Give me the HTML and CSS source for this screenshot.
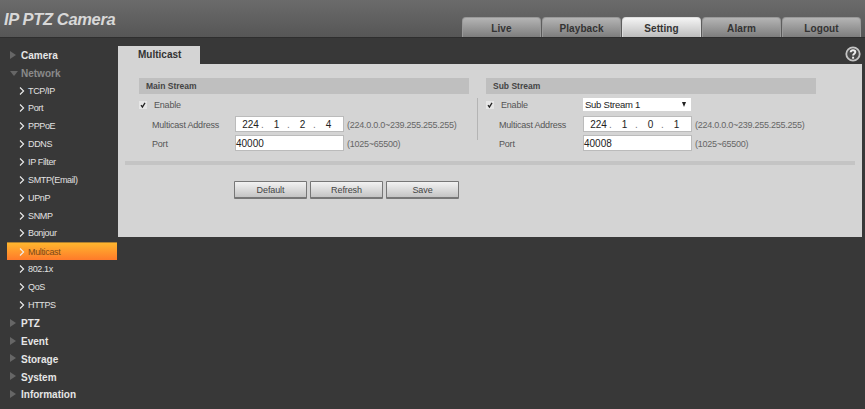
FILE: index.html
```html
<!DOCTYPE html>
<html lang="en">
<head>
    <meta charset="UTF-8">
    <title>IP PTZ Camera</title>
    <link rel="stylesheet" href="styles.css">
</head>
<body>
    <header class="top-bar">
        <div class="logo">IP PTZ Camera</div>
        <nav class="top-nav">
            <a class="top-tab">Live</a>
            <a class="top-tab">Playback</a>
            <a class="top-tab active">Setting</a>
            <a class="top-tab">Alarm</a>
            <a class="top-tab">Logout</a>
        </nav>
    </header>

    <div class="main">
        <ul class="side-menu">
            <li class="group"><span class="arrow"></span>Camera</li>
            <li class="group open"><span class="arrow"></span>Network</li>
            <li class="item"><svg class="chev" viewBox="0 0 6 8"><path d="M1 .5 4.600 4 1 7.500"/></svg>TCP/IP</li>
            <li class="item"><svg class="chev" viewBox="0 0 6 8"><path d="M1 .5 4.600 4 1 7.500"/></svg>Port</li>
            <li class="item"><svg class="chev" viewBox="0 0 6 8"><path d="M1 .5 4.600 4 1 7.500"/></svg>PPPoE</li>
            <li class="item"><svg class="chev" viewBox="0 0 6 8"><path d="M1 .5 4.600 4 1 7.500"/></svg>DDNS</li>
            <li class="item"><svg class="chev" viewBox="0 0 6 8"><path d="M1 .5 4.600 4 1 7.500"/></svg>IP Filter</li>
            <li class="item"><svg class="chev" viewBox="0 0 6 8"><path d="M1 .5 4.600 4 1 7.500"/></svg>SMTP(Email)</li>
            <li class="item"><svg class="chev" viewBox="0 0 6 8"><path d="M1 .5 4.600 4 1 7.500"/></svg>UPnP</li>
            <li class="item"><svg class="chev" viewBox="0 0 6 8"><path d="M1 .5 4.600 4 1 7.500"/></svg>SNMP</li>
            <li class="item"><svg class="chev" viewBox="0 0 6 8"><path d="M1 .5 4.600 4 1 7.500"/></svg>Bonjour</li>
            <li class="item active"><svg class="chev" viewBox="0 0 6 8"><path d="M1 .5 4.600 4 1 7.500"/></svg>Multicast</li>
            <li class="item"><svg class="chev" viewBox="0 0 6 8"><path d="M1 .5 4.600 4 1 7.500"/></svg>802.1x</li>
            <li class="item"><svg class="chev" viewBox="0 0 6 8"><path d="M1 .5 4.600 4 1 7.500"/></svg>QoS</li>
            <li class="item"><svg class="chev" viewBox="0 0 6 8"><path d="M1 .5 4.600 4 1 7.500"/></svg>HTTPS</li>
            <li class="group"><span class="arrow"></span>PTZ</li>
            <li class="group"><span class="arrow"></span>Event</li>
            <li class="group"><span class="arrow"></span>Storage</li>
            <li class="group"><span class="arrow"></span>System</li>
            <li class="group"><span class="arrow"></span>Information</li>
        </ul>

        <section class="content">
            <div class="tab-row">
                <div class="page-tab">Multicast</div>
                <svg class="help" viewBox="0 0 16 16">
                    <circle cx="8" cy="8" r="6.700"/>
                    <path d="M5.700 6.300C5.800 4.900 6.800 4.300 8 4.300c1.400 0 2.300.7 2.300 1.800 0 1.700-2.200 1.700-2.200 3.500"/>
                    <path d="M8.100 10.700v2"/>
                </svg>
            </div>
            <div class="panel">
                <div class="streams">
                    <div class="stream">
                        <h3 class="stream-title">Main Stream</h3>
                        <div class="enable-row">
                            <label class="enable"><svg class="check" viewBox="0 0 8 8"><path d="M2 4.200 3.400 6 6 1.800"/></svg>Enable</label>
                        </div>
                        <div class="row">
                            <span class="label">Multicast Address</span>
                            <div class="field ip"><span>224</span><i>.</i><span>1</span><i>.</i><span>2</span><i>.</i><span>4</span></div>
                            <span class="hint">(224.0.0.0~239.255.255.255)</span>
                        </div>
                        <div class="row">
                            <span class="label">Port</span>
                            <div class="field">40000</div>
                            <span class="hint">(1025~65500)</span>
                        </div>
                    </div>
                    <div class="stream second">
                        <h3 class="stream-title">Sub Stream</h3>
                        <div class="enable-row">
                            <label class="enable"><svg class="check" viewBox="0 0 8 8"><path d="M2 4.200 3.400 6 6 1.800"/></svg>Enable</label>
                            <div class="select">Sub Stream 1<span class="caret"></span></div>
                        </div>
                        <div class="row">
                            <span class="label">Multicast Address</span>
                            <div class="field ip"><span>224</span><i>.</i><span>1</span><i>.</i><span>0</span><i>.</i><span>1</span></div>
                            <span class="hint">(224.0.0.0~239.255.255.255)</span>
                        </div>
                        <div class="row">
                            <span class="label">Port</span>
                            <div class="field">40008</div>
                            <span class="hint">(1025~65500)</span>
                        </div>
                    </div>
                </div>
                <div class="divider"></div>
                <div class="buttons">
                    <button class="btn">Default</button>
                    <button class="btn">Refresh</button>
                    <button class="btn">Save</button>
                </div>
            </div>
        </section>
    </div>
</body>
</html>
```

FILE: styles.css
```css
html, body {
    margin: 0;
    height: 100%;
}
body {
    background-color: #383838;
    font-family: "Liberation Sans", Arial, sans-serif;
    font-size: 10px;
    overflow: hidden;
}
.top-bar {
    display: flex;
    justify-content: space-between;
    height: 37px;
    background: linear-gradient(#6b6b6b, #565656);
    border-bottom: 1px solid #2e2e2e;
}
.logo {
    padding: 10px 0 0 4px;
    font-size: 16.500px;
    font-weight: bold;
    font-style: italic;
    letter-spacing: -0.35px;
    color: #d8d8d8;
}
.top-nav {
    display: flex;
    align-items: flex-end;
    gap: 1px;
    padding-right: 4px;
}
.top-tab {
    width: 79px;
    height: 20px;
    line-height: 21px;
    text-align: center;
    font-size: 10px;
    font-weight: bold;
    letter-spacing: 0.1px;
    color: #333;
    background: linear-gradient(#b4b4b4, #7d7d7d);
    border: 1px solid #999;
    border-bottom: none;
    border-radius: 4px 4px 0 0;
    box-sizing: border-box;
}
.top-tab.active {
    background: linear-gradient(#f4f4f4, #bcbcbc);
    border-color: #ddd;
}
.main {
    display: flex;
    align-items: flex-start;
}
.side-menu {
    width: 110px;
    margin: 8px 0 0 8px;
    padding: 0;
    list-style: none;
    flex-shrink: 0;
}
.side-menu li {
    display: flex;
    align-items: center;
    height: 17.850px;
    white-space: nowrap;
}
.group {
    padding: 2px 0 0 13px;
    box-sizing: border-box;
    font-size: 10px;
    font-weight: bold;
    color: #e6e6e6;
    position: relative;
}
.group.open {
    color: #8a8a8a;
}
.arrow {
    position: absolute;
    left: 2px;
    top: 5px;
    border-left: 6px solid #666;
    border-top: 4px solid transparent;
    border-bottom: 4px solid transparent;
}
.open .arrow {
    left: 2px;
    top: 7px;
    border-top: 5px solid #666;
    border-left: 4px solid transparent;
    border-right: 4px solid transparent;
    border-bottom: none;
}
.item {
    font-size: 9px;
    letter-spacing: -0.35px;
    color: #e2e2e2;
}
.item.active {
    width: 110px;
    margin-left: -1px;
    padding-left: 1px;
    box-sizing: border-box;
    color: #7a4a1a;
    background: linear-gradient(#ffb62e, #ff7a2a);
    border-top: 1px solid #b08030;
}
.chev {
    width: 6px;
    height: 8px;
    margin: 0 3px 0 11px;
    fill: none;
    stroke: #eee;
    stroke-width: 1.100;
}
.content {
    flex: 1;
    margin-top: 8px;
    margin-right: 3px;
}
.tab-row {
    display: flex;
    justify-content: space-between;
    height: 18px;
}
.page-tab {
    width: 82px;
    padding-left: 20px;
    box-sizing: border-box;
    line-height: 18px;
    font-size: 10px;
    font-weight: bold;
    color: #333;
    background-color: #d4d4d4;
}
.help {
    width: 16px;
    height: 16px;
    margin-right: 1px;
    fill: #4a4a4a;
    stroke: #c4c4c4;
    stroke-width: 1.800;
}
.help path {
    fill: none;
    stroke: #eee;
    stroke-width: 2;
}
.panel {
    height: 173px;
    background-color: #d4d4d4;
    padding-top: 14px;
    box-sizing: border-box;
}
.streams {
    display: flex;
    padding-left: 21px;
    gap: 17px;
}
.stream {
    width: 330px;
    position: relative;
}
.stream.second::before {
    content: "";
    position: absolute;
    left: -9px;
    top: 20px;
    height: 42px;
    border-left: 1px solid #b4b4b4;
}
.stream-title {
    margin: 0;
    height: 16px;
    padding-left: 7px;
    line-height: 16px;
    font-size: 8.500px;
    font-weight: bold;
    color: #444;
    background-color: #bfbfbf;
}
.enable-row {
    display: flex;
    align-items: center;
    height: 21px;
    font-size: 9px;
    letter-spacing: -0.2px;
    color: #555;
}
.row {
    display: flex;
    align-items: center;
    height: 19px;
    font-size: 9px;
    letter-spacing: -0.2px;
    color: #555;
}
.enable {
    display: flex;
    align-items: center;
    width: 95px;
}
.check {
    width: 8px;
    height: 8px;
    margin-right: 7px;
    background-color: #e6e6e6;
    fill: none;
    stroke: #222;
    stroke-width: 1.300;
}
.label {
    width: 83px;
    margin-left: 13px;
}
.second .label {
    width: 84px;
}
.field {
    display: flex;
    align-items: center;
    width: 109px;
    height: 16px;
    margin-bottom: 1px;
    box-sizing: border-box;
    background-color: #fff;
    border: 1px solid #bbb;
    font-size: 10px;
    letter-spacing: 0;
    color: #222;
}
.field.ip span {
    width: 21px;
    text-align: center;
}
.field.ip span:first-child {
    margin-left: 4px;
}
.field.ip i {
    width: 5px;
    font-style: normal;
    color: #777;
}
.hint {
    margin-left: 3px;
    font-size: 9px;
    letter-spacing: -0.25px;
    color: #666;
}
.select {
    display: flex;
    align-items: center;
    justify-content: space-between;
    width: 108px;
    height: 13px;
    margin-left: 2px;
    padding: 0 5px 0 2px;
    box-sizing: border-box;
    font-size: 9.500px;
    letter-spacing: -0.25px;
    color: #222;
    background-color: #fff;
}
.caret {
    border-top: 5px solid #222;
    border-left: 2.500px solid transparent;
    border-right: 2.500px solid transparent;
}
.divider {
    height: 4px;
    margin: 8px 7px 0;
    background-color: #c4c4c4;
}
.buttons {
    display: flex;
    gap: 3px;
    padding: 16px 0 0 116px;
}
.btn {
    width: 73px;
    height: 18px;
    padding: 0;
    font-family: inherit;
    font-size: 9px;
    letter-spacing: -0.1px;
    color: #444;
    background: linear-gradient(#f2f2f2, #c4c4c4);
    border: 1px solid #777;
    border-bottom-width: 2px;
    border-radius: 1px;
}
```
